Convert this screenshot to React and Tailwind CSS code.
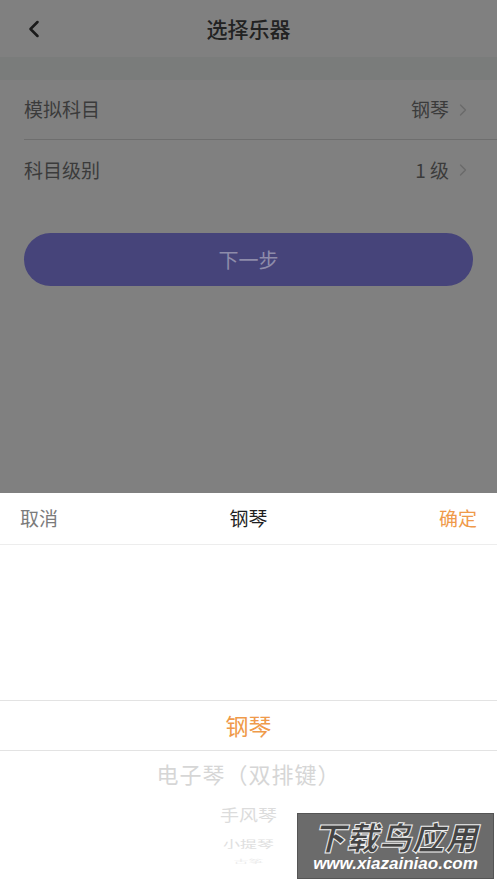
import { ChevronLeft, ChevronRight } from 'lucide-react'

const font = { fontFamily: '"Noto Sans CJK SC", "Noto Sans", sans-serif' }

function Row({ label, value, border }) {
  return (
    <div className={`flex items-center h-[60px] ml-6 pr-6 ${border ? 'border-b border-[#6e6e6e]' : ''}`}>
      <span className="text-[19px] text-[#3b3b3b] flex-1">{label}</span>
      <span className="text-[19px] text-[#3b3b3b]">{value}</span>
      <ChevronRight className="w-5 h-5 text-[#6a6a6a] ml-1" strokeWidth={1.5} />
    </div>
  )
}

export default function App() {
  return (
    <div className="relative w-[497px] h-[883px] overflow-hidden bg-[#808080] flex flex-col" style={font}>
      {/* page under the mask */}
      <div className="flex items-center h-[57px] px-5">
        <ChevronLeft className="w-7 h-7 text-[#1a1a1a]" strokeWidth={2.2} />
        <div className="flex-1 text-center text-[21px] font-medium text-[#222] pr-7">选择乐器</div>
      </div>
      <div className="h-[23px] bg-[#7a7c7b]" />
      <Row label="模拟科目" value="钢琴" border />
      <Row label="科目级别" value="1 级" />
      <div className="px-6 mt-[33px]">
        <div className="h-[53px] rounded-full bg-[#46447a] flex items-center justify-center text-[20px] text-[#8e8caa]">
          下一步
        </div>
      </div>
      <div className="flex-1" />

      {/* picker sheet */}
      <div className="h-[390px] bg-white flex flex-col">
        <div className="flex items-center h-[52px] px-5 border-b border-[#ededed]">
          <span className="text-[19px] text-[#7b7b7b]">取消</span>
          <span className="flex-1 text-center text-[19px] text-[#1f1f1f]">钢琴</span>
          <span className="text-[19px] text-[#ef9a4a]">确定</span>
        </div>
        <div className="h-[155px]" />
        <div className="h-[51px] border-y border-[#e3e3e3] flex items-center justify-center text-[23px] text-[#ef9a4a]">
          钢琴
        </div>
        <div className="flex flex-col items-center">
          <div className="h-[44px] flex items-center text-[22px] tracking-[1px] text-[#d6d6d6]">电子琴（双排键）</div>
          <div className="h-[38px] flex items-center text-[19px] text-[#dcdcdc] scale-y-[0.85]">手风琴</div>
          <div className="h-[22px] flex items-center text-[17px] text-[#e0e0e0] scale-y-[0.6]">小提琴</div>
          <div className="h-[12px] flex items-center text-[15px] text-[#ececec] scale-y-[0.3]">古筝</div>
        </div>
      </div>

      {/* watermark */}
      <div className="absolute left-[297px] top-[813px] w-[197px] h-[66px] bg-[#6b6b6b] border border-[#555] flex flex-col items-center justify-center overflow-hidden">
        <div className="text-[32px] leading-[36px] font-black italic text-[#444] tracking-[1px]" style={{ WebkitTextStroke: '1px #eee' }}>下载鸟应用</div>
        <div className="text-[17px] leading-[20px] font-bold italic text-white" style={{ fontFamily: '"Liberation Sans", sans-serif' }}>www.xiazainiao.com</div>
      </div>
    </div>
  )
}
